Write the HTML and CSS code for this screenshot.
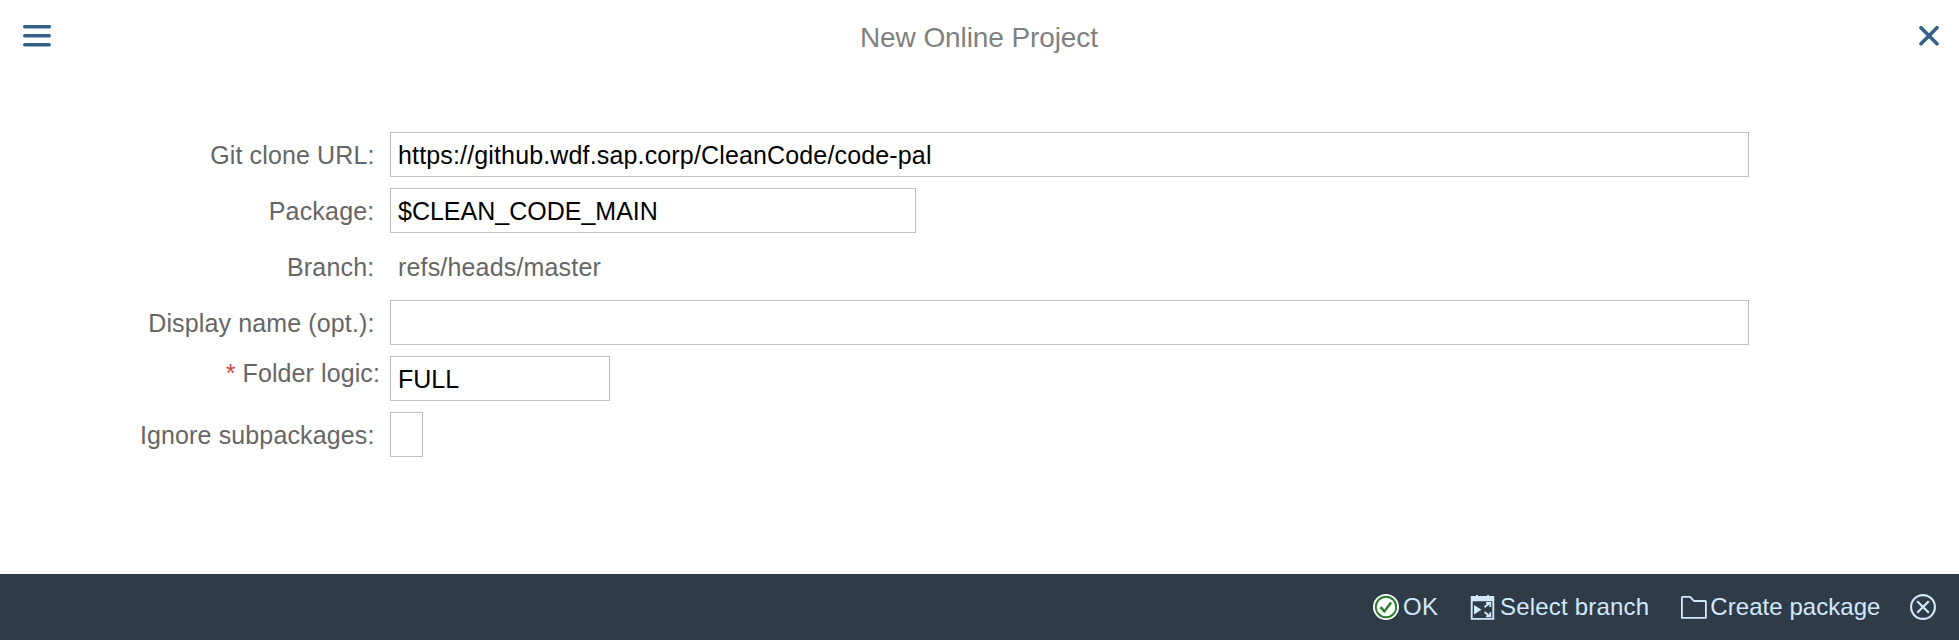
FILE: index.html
```html
<!DOCTYPE html>
<html lang="en">
<head>
<meta charset="utf-8">
<title>New Online Project</title>
<link rel="stylesheet" href="styles.css">
</head>
<body>
<div class="dialog">
  <header class="header">
    <svg class="menu-icon" width="28" height="23" viewBox="0 0 28 23"><path d="M1.8 1.7h24.4M1.8 10.700h24.4M1.8 19.700h24.4"/></svg>
    <h1 class="title">New Online Project</h1>
    <svg class="close-icon" width="20" height="20" viewBox="0 0 20 20"><path d="M2 1.700l16 16M18 1.700L2 17.700"/></svg>
  </header>
  <main class="form">
    <div class="row"><label class="label git">Git clone URL:</label><div class="field wide url">https://github.wdf.sap.corp/CleanCode/code-pal</div></div>
    <div class="row"><label class="label package">Package:</label><div class="field medium">$CLEAN_CODE_MAIN</div></div>
    <div class="row"><label class="label branch">Branch:</label><div class="field plain">refs/heads/master</div></div>
    <div class="row"><label class="label display">Display name (opt.):</label><div class="field wide"></div></div>
    <div class="row"><label class="label folder"><span class="required">*</span> Folder logic:</label><div class="field small">FULL</div></div>
    <div class="row"><label class="label ignore">Ignore subpackages:</label><div class="field check"></div></div>
  </main>
  <footer class="footer">
    <div class="action ok">
      <svg width="26" height="26" viewBox="0 0 26 26"><circle cx="13" cy="13" r="13" fill="#fff"/><circle cx="13" cy="13" r="10.2" fill="none" stroke="#2b7c2b" stroke-width="1.9"/><path d="M7.6 13.2l3.7 4.2 6.8-8.8" fill="none" stroke="#2b7c2b" stroke-width="2.5"/></svg>
      <span>OK</span>
    </div>
    <div class="action select">
      <svg width="25" height="25" viewBox="0 0 25 25"><path d="M1.700 2h21.600v21.900H1.700z" fill="none" stroke="#d1e8ff" stroke-width="1.900"/><path d="M1 1.300h4.500v1h3v-1h8v1h3v-1H24V6.300H1zM6 0h2v1H6zM17 0h2v1h-2zM4 10l7.500 4.800L4 19.600z" fill="#d1e8ff"/><path d="M14.500 12.200L19.500 8M16 7.900h4.300v4M14.500 17l5 4M16 21.300h4.300v-4" fill="none" stroke="#d1e8ff" stroke-width="1.800"/></svg>
      <span>Select branch</span>
    </div>
    <div class="action create">
      <svg width="26" height="23" viewBox="0 0 26 23"><path d="M.9 21.900V1.500Q.9.900 1.500.9H9.200L13 5H24.300Q24.900 5 24.900 5.600V21.900z" fill="none" stroke="#d1e8ff" stroke-width="1.800"/></svg>
      <span>Create package</span>
    </div>
    <div class="action cancel">
      <svg width="26" height="26" viewBox="0 0 26 26"><circle cx="13" cy="13" r="11.900" fill="none" stroke="#d1e8ff" stroke-width="2.100"/><path d="M7.200 7.200l11.600 11.600M18.800 7.200L7.200 18.800" stroke="#d1e8ff" stroke-width="2.300"/></svg>
    </div>
  </footer>
</div>
</body>
</html>
```
FILE: styles.css
```css
* { box-sizing: border-box; }
body { margin: 0; background: #fff; font-family: "Liberation Sans", Arial, sans-serif; }
svg { display: block; flex: none; }
.dialog { display: flex; flex-direction: column; height: 640px; overflow: hidden; }
.header { display: flex; height: 74px; padding: 0 20px 0 23px; }
.menu-icon { margin-top: 25px; fill: none; stroke: #346187; stroke-width: 3.6; stroke-linecap: round; }
.close-icon { margin: 26px 0 0 auto; fill: none; stroke: #346187; stroke-width: 3.6; stroke-linecap: round; }
.title { margin: 0 0 0 809px; font-size: 28px; font-weight: 400; line-height: 75px; letter-spacing: -.1px; color: #7f7f7f; }
.form { display: flex; flex-direction: column; flex: 1; gap: 11px; padding-top: 58px; }
.row { display: flex; height: 45px; font-size: 25px; line-height: 44px; white-space: nowrap; }
.label { width: 390px; padding: 1px 15.5px 0 0; text-align: right; color: #666; letter-spacing: .2px; }
.label.git { letter-spacing: .12px; }
.label.display, .label.ignore { letter-spacing: .13px; }
.label.folder { padding: 0 10px 0 0; line-height: 34px; letter-spacing: .1px; }
.required { color: #cc4a3f; }
.field { height: 45px; padding-left: 7px; border: 1px solid #bfbfbf; color: #000; }
.wide { width: 1359px; }
.medium { width: 526px; }
.small { width: 220px; }
.check { width: 33px; }
.plain { border-color: transparent; color: #666; letter-spacing: .17px; }
.url { letter-spacing: .15px; }
.footer { display: flex; align-items: center; height: 66px; padding-left: 1373px; background: #2f3c48; color: #d1e8ff; font-size: 24px; line-height: 64px; white-space: nowrap; }
.action { display: flex; align-items: center; gap: 4px; height: 66px; }
.ok { width: 65px; letter-spacing: .3px; }
.select { margin-left: 32px; gap: 5px; letter-spacing: .2px; }
.create { width: 200px; margin-left: 32px; gap: 3px; letter-spacing: .05px; }
.cancel { margin-left: 29px; }
```
